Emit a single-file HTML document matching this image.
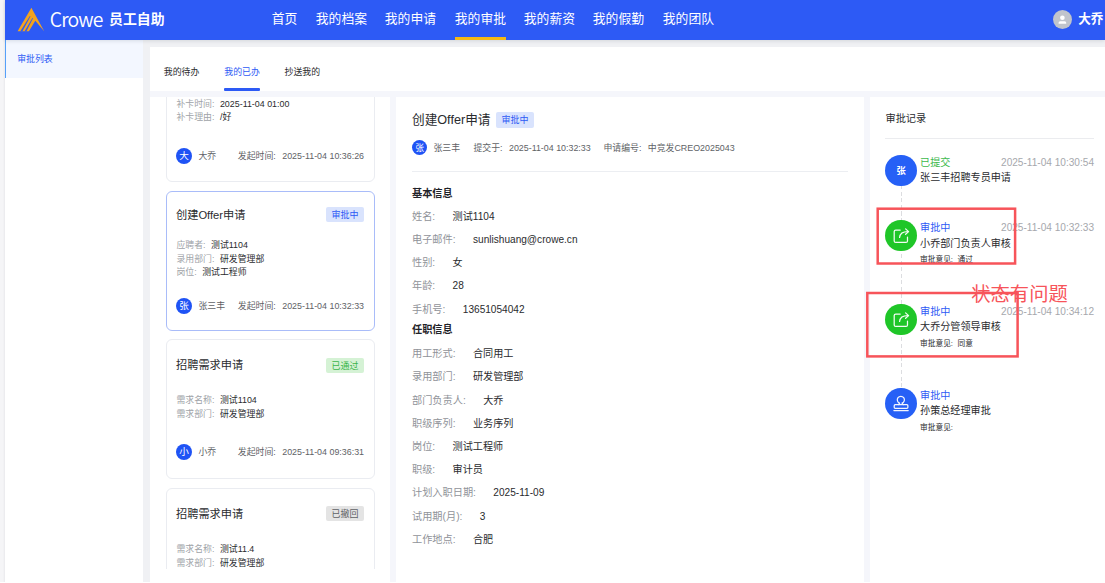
<!DOCTYPE html>
<html lang="zh-CN">
<head>
<meta charset="utf-8">
<title>Crowe 员工自助</title>
<style>
*{box-sizing:border-box;margin:0;padding:0}
html,body{width:1105px;height:583px;overflow:hidden;background:#f0f2f5}
body{font-family:"Liberation Sans","Noto Sans CJK SC",sans-serif;color:#2a2b2e;font-size:9.6px;position:relative}
.a{position:absolute;white-space:nowrap}
#root{position:absolute;left:0;top:0;width:1105px;height:583px;overflow:hidden;background:#f0f1f4}
.strip{left:0;top:0;width:4.8px;height:583px;background:linear-gradient(to right,#f5f5f7 0,#f5f5f7 60%,#ececef 88%,#ececef 100%)}
.bot{left:0;top:581.7px;width:1105px;height:1.3px;background:#fff;z-index:20}
.inner{left:150px;top:46.6px;width:955px;height:537px;background:#f5f6fb}
/* header */
.hdr{left:4.8px;top:0;width:1100.2px;height:40px;background:#2d5af5;box-shadow:0 1px 4px rgba(0,21,41,.12);z-index:5}
.nav{top:0;height:40px;line-height:38px;font-size:12.8px;color:#fff}
.crowe{left:45px;top:0;height:40px;line-height:37px;font-size:19.4px;color:#fff;font-family:"Noto Sans CJK SC","Liberation Sans",sans-serif;font-weight:350;letter-spacing:-0.85px}
.brand{left:104.2px;top:0;height:40px;line-height:39.6px;font-size:13.9px;font-weight:700;color:#fff}
/* sidebar */
.side{left:4.8px;top:40px;width:138.2px;height:543px;background:#fff}
.side .act{left:0;top:0;width:138px;height:38px;background:#f3f7ff;border-left:1.5px solid #55a0f9;color:#2d5af5;line-height:38.4px;padding-left:11.4px;font-size:8.9px}
/* tabs */
.tabs{left:150px;top:46.6px;width:955px;height:44px;background:#fff}
.tab{top:16.9px;height:18px;line-height:18px;font-size:8.9px;color:#2a2b2e}
/* list */
.list{left:150px;top:97px;width:240px;height:486px;background:#fff;overflow:hidden}
.card{left:16px;width:209px;border:1px solid #eaecf1;border-radius:6px;background:#fff}
.card.sel{border-color:#a9bcf9}
.ct{left:9px;font-size:11.2px;color:#2a2b2e;height:16px;line-height:16px}
.tag{right:10px;height:15.1px;line-height:16.6px;padding:0 5.4px;border-radius:2px;font-size:9px}
.tag.b{background:#d9e3fd;color:#2d5af5}
.tag.g{background:#d5f2d5;color:#3bb54a}
.tag.y{background:#e4e4e4;color:#606266}
.ln{left:9.5px;height:14px;line-height:14px;font-size:8.9px;color:#2a2b2e}
.ln i{font-style:normal;color:#a0a3a8;margin-right:3px}
.av{border-radius:50%;background:#1f53f5;color:#fff;text-align:center}
.nm{color:#606266;font-size:8.9px;height:16px;line-height:16px}
.nm i{font-style:normal;margin-right:4px}
/* detail */
.detail{left:396px;top:97px;width:467.6px;height:486px;background:#fff}
.row{left:16px;height:16px;line-height:16px;font-size:10.1px;color:#2a2b2e}
.row i{font-style:normal;color:#909399;margin-right:17.4px;font-size:10.2px}
.sec{left:16px;height:16px;line-height:16px;font-size:10.2px;font-weight:700;color:#1f2329}
/* records */
.rec{left:870px;top:97px;width:240px;height:486px;background:#fff}
.st{left:50.1px;font-size:10.1px;height:14px;line-height:14px}
.tm{right:16px;font-size:10.1px;height:14px;line-height:14px;color:#a6a8ad}
.who{left:50.1px;font-size:10.1px;height:16px;line-height:16px;color:#2a2b2e}
.op{left:50.1px;font-size:7.7px;height:12px;line-height:12px;color:#2a2b2e}
.op i{font-style:normal;margin-right:2.5px}
.ic{left:15.4px;width:31.4px;height:31.4px;fill:none;stroke:#fff;stroke-width:1.25;stroke-linecap:round;stroke-linejoin:round;opacity:.95}
.dl{left:30.5px;width:1px;background:repeating-linear-gradient(to bottom,#dcdde0 0,#dcdde0 4.1px,rgba(255,255,255,0) 4.1px,rgba(255,255,255,0) 6.6px)}
.circ{left:15.4px;width:31.4px;height:31.4px;border-radius:50%}
</style>
</head>
<body>
<div id="root">

<div class="a strip"></div>
<div class="a bot"></div>
<div class="a inner"></div>
<!-- header -->
<div class="a hdr">
  <svg class="a" style="left:10px;top:5px" width="34" height="30" viewBox="15 5 34 30">
    <polygon points="31.4,7.8 44.2,31.2 35.3,20.8 28.9,31.2 17.6,31.2" fill="#f3a31f"/>
    <polygon points="20.2,31.6 22.3,31.6 30.5,16.2 29.9,16" fill="#2d5af5"/>
    <polygon points="24.5,31.6 26.4,31.6 33,18.2 32.4,18" fill="#2d5af5"/>
  </svg>
  <div class="a crowe">Crowe</div>
  <div class="a brand">员工自助</div>
  <div class="a nav" style="left:267px">首页</div>
  <div class="a nav" style="left:311px">我的档案</div>
  <div class="a nav" style="left:380px">我的申请</div>
  <div class="a nav" style="left:450px">我的审批</div>
  <div class="a nav" style="left:519px">我的薪资</div>
  <div class="a nav" style="left:588px">我的假勤</div>
  <div class="a nav" style="left:658px">我的团队</div>
  <div class="a" style="left:450px;top:37px;width:51px;height:3px;background:#f5b914"></div>
  <div class="a" style="left:1048px;top:10px;width:19px;height:19px;border-radius:50%;background:#c0c4cc"></div>
  <svg class="a" style="left:1048px;top:10px" width="19" height="19" viewBox="0 0 19 19">
    <circle cx="9.4" cy="7.7" r="2.3" fill="#fff"/>
    <path d="M5.6 13.8v-1q0-1.5 1.5-1.5h4.6q1.5 0 1.5 1.5v1z" fill="#fff"/>
  </svg>
  <div class="a" style="left:1073.4px;top:0;height:40px;line-height:39.8px;font-size:12.6px;font-weight:700;color:#fff">大乔</div>
</div>

<!-- sidebar -->
<div class="a side">
  <div class="a act">审批列表</div>
</div>

<!-- tabs -->
<div class="a tabs">
  <div class="a tab" style="left:13.8px">我的待办</div>
  <div class="a tab" style="left:74.3px;color:#2d5af5">我的已办</div>
  <div class="a tab" style="left:134.6px">抄送我的</div>
  <div class="a" style="left:74.4px;top:41.2px;width:35.6px;height:2.8px;background:#2d5af5;border-radius:1px"></div>
</div>

<!-- list -->
<div class="a list">
  <!-- card 1 (partially scrolled) -->
  <div class="a card" style="top:-60px;height:145px">
    <div class="a ln" style="top:58.5px"><i>补卡时间:</i> 2025-11-04 01:00</div>
    <div class="a ln" style="top:72px"><i>补卡理由:</i> /好</div>
    <div class="a av" style="left:9px;top:110px;width:16px;height:16px;line-height:16px;font-size:9.6px">大</div>
    <div class="a nm" style="left:31.4px;top:110px">大乔</div>
    <div class="a nm" style="right:10px;top:110px"><i>发起时间:</i> 2025-11-04 10:36:26</div>
  </div>
  <!-- card 2 selected -->
  <div class="a card sel" style="top:93.6px;height:140px">
    <div class="a ct" style="top:15px">创建Offer申请</div>
    <div class="a tag b" style="top:15px">审批中</div>
    <div class="a ln" style="top:46px"><i>应聘者:</i> 测试1104</div>
    <div class="a ln" style="top:60px"><i>录用部门:</i> 研发管理部</div>
    <div class="a ln" style="top:73px"><i>岗位:</i> 测试工程师</div>
    <div class="a av" style="left:9px;top:106px;width:16px;height:16px;line-height:16px;font-size:9.6px">张</div>
    <div class="a nm" style="left:31.4px;top:106px">张三丰</div>
    <div class="a nm" style="right:10px;top:106px"><i>发起时间:</i> 2025-11-04 10:32:33</div>
  </div>
  <!-- card 3 -->
  <div class="a card" style="top:242.3px;height:140px">
    <div class="a ct" style="top:17px">招聘需求申请</div>
    <div class="a tag g" style="top:17.4px">已通过</div>
    <div class="a ln" style="top:53px"><i>需求名称:</i> 测试1104</div>
    <div class="a ln" style="top:66.6px"><i>需求部门:</i> 研发管理部</div>
    <div class="a av" style="left:9px;top:103.7px;width:16px;height:16px;line-height:16px;font-size:9.6px">小</div>
    <div class="a nm" style="left:31.4px;top:103.7px">小乔</div>
    <div class="a nm" style="right:10px;top:103.7px"><i>发起时间:</i> 2025-11-04 09:36:31</div>
  </div>
  <!-- card 4 -->
  <div class="a card" style="top:390.5px;height:138px">
    <div class="a ct" style="top:17px">招聘需求申请</div>
    <div class="a tag y" style="top:17px">已撤回</div>
    <div class="a ln" style="top:53px"><i>需求名称:</i> 测试11.4</div>
    <div class="a ln" style="top:67px"><i>需求部门:</i> 研发管理部</div>
  </div>
  <div class="a" style="left:0;top:472px;width:240px;height:14px;background:#fff"></div>
</div>

<!-- detail -->
<div class="a detail">
  <div class="a" style="left:16px;top:13.3px;height:20px;line-height:20px;font-size:12.65px;color:#2a2b2e">创建Offer申请</div>
  <div class="a" style="left:99.8px;top:15.4px;height:15.2px;line-height:17px;padding:0 5.6px;border-radius:2px;background:#d9e3fd;color:#2d5af5;font-size:9px">审批中</div>
  <div class="a av" style="left:15.8px;top:42.9px;width:15.6px;height:15.6px;line-height:17px;font-size:8.8px">张</div>
  <div class="a nm" style="left:37.5px;top:43.3px;font-size:8.9px">张三丰</div>
  <div class="a nm" style="left:77.4px;top:43.3px"><i>提交于:</i> 2025-11-04 10:32:33</div>
  <div class="a nm" style="left:207.4px;top:43.3px"><i>申请编号:</i> 中竞发CREO2025043</div>
  <div class="a" style="left:16px;top:74px;width:435.6px;height:1px;background:#eceef2"></div>
  <div class="a sec" style="top:89px">基本信息</div>
  <div class="a row" style="top:111.6px"><i>姓名:</i>测试1104</div>
  <div class="a row" style="top:134.8px"><i>电子邮件:</i>sunlishuang@crowe.cn</div>
  <div class="a row" style="top:158px"><i>性别:</i>女</div>
  <div class="a row" style="top:181.2px"><i>年龄:</i>28</div>
  <div class="a row" style="top:204.7px"><i>手机号:</i>13651054042</div>
  <div class="a sec" style="top:225.1px">任职信息</div>
  <div class="a row" style="top:249.2px"><i>用工形式:</i>合同用工</div>
  <div class="a row" style="top:272.4px"><i>录用部门:</i>研发管理部</div>
  <div class="a row" style="top:295.6px"><i>部门负责人:</i>大乔</div>
  <div class="a row" style="top:318.8px"><i>职级序列:</i>业务序列</div>
  <div class="a row" style="top:342px"><i>岗位:</i>测试工程师</div>
  <div class="a row" style="top:365.2px"><i>职级:</i>审计员</div>
  <div class="a row" style="top:388.4px"><i>计划入职日期:</i>2025-11-09</div>
  <div class="a row" style="top:411.6px"><i>试用期(月):</i>3</div>
  <div class="a row" style="top:434.8px"><i>工作地点:</i>合肥</div>
</div>

<!-- records -->
<div class="a rec">
  <div class="a" style="left:15.5px;top:14px;height:16px;line-height:16px;font-size:10.2px;color:#2a2b2e">审批记录</div>
  <div class="a" style="left:15.4px;top:41.4px;width:208.8px;height:1px;background:#ebecef"></div>
  <div class="a dl" style="top:88px;height:35px"></div>
  <div class="a dl" style="top:156.7px;height:50.5px"></div>
  <div class="a dl" style="top:240.4px;height:50.8px"></div>

  <div class="a circ" style="top:57.6px;background:#2660f6;color:#fff;text-align:center;line-height:32px;font-size:9.3px;font-weight:700">张</div>
  <div class="a st" style="top:58.8px;color:#3cb94c">已提交</div>
  <div class="a tm" style="top:58.8px">2025-11-04 10:30:54</div>
  <div class="a who" style="top:72.8px">张三丰招聘专员申请</div>

  <div class="a circ" style="top:122.7px;background:#1fc628"></div>
  <svg class="a ic" style="top:122.7px" viewBox="0 0 31.4 31.4"><path d="M15.2 10.1H10.7a1.5 1.5 0 0 0-1.5 1.5v9.3a1.5 1.5 0 0 0 1.5 1.5h10.3a1.5 1.5 0 0 0 1.5-1.5V17.2"/><path d="M14.6 17.5C14.9 13.5 17.5 11.6 23 11.6"/><path d="M20.6 8.9l3 2.7-3 2.7"/></svg>
  <div class="a st" style="top:123.5px;color:#2d5af5">审批中</div>
  <div class="a tm" style="top:123.5px">2025-11-04 10:32:33</div>
  <div class="a who" style="top:138.5px">小乔部门负责人审核</div>
  <div class="a op" style="top:157px"><i>审批意见:</i> 通过</div>

  <div class="a circ" style="top:206.9px;background:#1fc628"></div>
  <svg class="a ic" style="top:206.9px" viewBox="0 0 31.4 31.4"><path d="M15.2 10.1H10.7a1.5 1.5 0 0 0-1.5 1.5v9.3a1.5 1.5 0 0 0 1.5 1.5h10.3a1.5 1.5 0 0 0 1.5-1.5V17.2"/><path d="M14.6 17.5C14.9 13.5 17.5 11.6 23 11.6"/><path d="M20.6 8.9l3 2.7-3 2.7"/></svg>
  <div class="a st" style="top:208.1px;color:#2d5af5">审批中</div>
  <div class="a tm" style="top:208.2px">2025-11-04 10:34:12</div>
  <div class="a who" style="top:222px">大乔分管领导审核</div>
  <div class="a op" style="top:241px"><i>审批意见:</i> 同意</div>

  <div class="a circ" style="top:291.1px;background:#2660f6"></div>
  <svg class="a ic" style="top:291.1px" viewBox="0 0 31.4 31.4"><path d="M13.4 16.6L14.67 15.2A3.55 3.55 0 1 1 17.03 15.2L18.3 16.6"/><rect x="9.2" y="16.7" width="13.7" height="3.6" rx="1"/><path d="M8.9 22.6H23.2"/></svg>
  <div class="a st" style="top:291.5px;color:#2d5af5">审批中</div>
  <div class="a who" style="top:306.1px">孙策总经理审批</div>
  <div class="a op" style="top:324.6px"><i>审批意见:</i></div>
</div>

<!-- annotations -->
<svg class="a" style="left:0;top:0;z-index:9" width="1105" height="583" viewBox="0 0 1105 583">
  <rect x="877.7" y="208.7" width="137.4" height="54.8" fill="none" stroke="#f7545a" stroke-width="2.5"/>
  <rect x="867.3" y="293" width="150.3" height="63.4" fill="none" stroke="#f7545a" stroke-width="2.5"/>
  <text x="971.3" y="300.6" font-size="19.3" fill="#f7545a" font-family="'Liberation Sans','Noto Sans CJK SC',sans-serif">状态有问题</text>
</svg>

</div>
</body>
</html>
